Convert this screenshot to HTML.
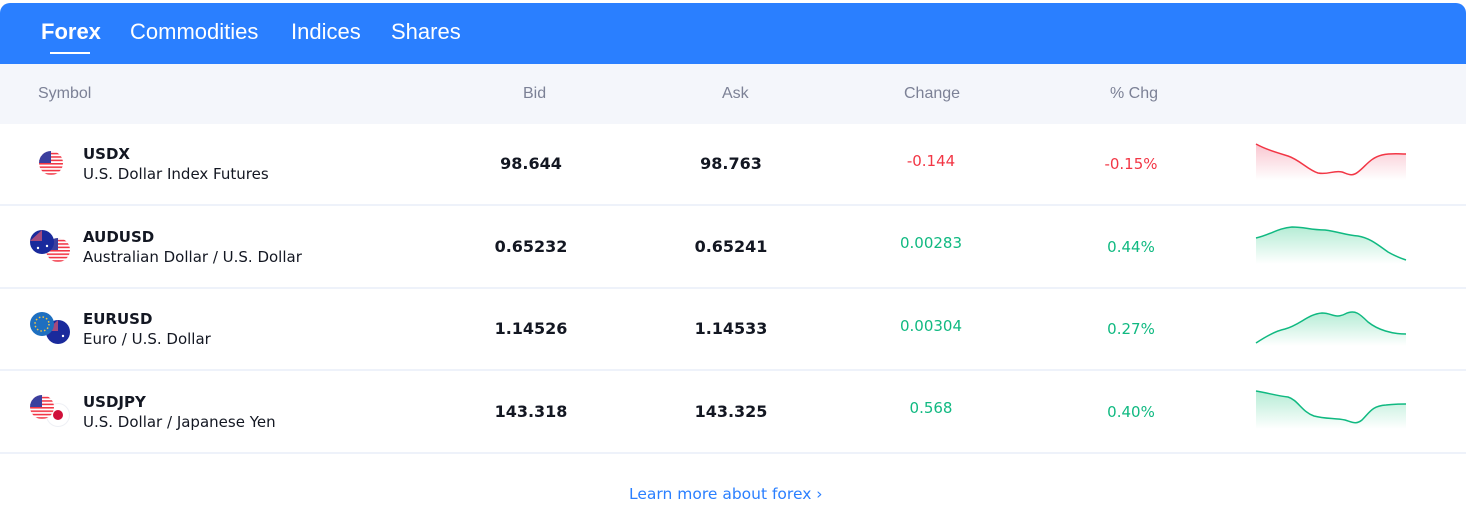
<!DOCTYPE html>
<html><head><style>
body{margin:0;width:1466px;height:512px;background:#fff;font-family:"Liberation Sans","DejaVu Sans",sans-serif;position:relative;overflow:hidden}
.a{position:absolute;white-space:nowrap}
.top{left:0;top:3px;width:1466px;height:61px;background:#2a7fff;border-radius:10px 10px 0 0}
.tab{top:19px;font-size:22px;color:#fff}
.hd{left:0;top:64px;width:1466px;height:60px;background:#f4f6fb}
.hc{top:85px;font-size:16px;color:#7c8196}
.ln{left:0;width:1466px;height:2px;background:#eef2fa}
.dv{font-family:"DejaVu Sans",sans-serif}
.sym{font-size:15px;font-weight:bold;color:#131722;font-family:"DejaVu Sans",sans-serif}
.nm{font-size:15px;color:#131722;font-family:"DejaVu Sans",sans-serif}
.num{font-size:16px;font-weight:bold;color:#131722;transform:translateX(-50%);font-family:"DejaVu Sans",sans-serif}
.c{font-size:15px;transform:translateX(-50%);font-family:"DejaVu Sans",sans-serif}
.r{color:#f23645}.g{color:#10b981}
</style></head><body>
<div class="a top"></div>
<div class="a tab" style="left:41px;font-weight:bold">Forex</div>
<div class="a" style="left:50px;top:52px;width:40px;height:2px;background:#fff"></div>
<div class="a tab" style="left:130px">Commodities</div>
<div class="a tab" style="left:291px">Indices</div>
<div class="a tab" style="left:391px">Shares</div>
<div class="a hd"></div>
<div class="a hc" style="left:38px">Symbol</div>
<div class="a hc" style="left:523px">Bid</div>
<div class="a hc" style="left:722px">Ask</div>
<div class="a hc" style="left:904px">Change</div>
<div class="a hc" style="left:1110px">% Chg</div>
<div class="a ln" style="top:204px"></div>
<div class="a ln" style="top:287px"></div>
<div class="a ln" style="top:369px"></div>
<div class="a ln" style="top:452px"></div>

<svg class="a" style="left:0;top:0" width="80" height="512">
<defs>
<pattern id="us" width="24" height="3.4" patternUnits="userSpaceOnUse"><rect width="24" height="1.7" fill="#f23645"/><rect y="1.7" width="24" height="1.7" fill="#fff"/></pattern>
</defs>
<g transform="translate(51,163)"><circle r="12" fill="url(#us)"/><path d="M-12 0A12 12 0 0 1 0-12V0Z" fill="#3b3f9e"/></g>
<g transform="translate(58,250)"><circle r="12" fill="url(#us)"/><path d="M-12 0A12 12 0 0 1 0-12V0Z" fill="#3b3f9e"/></g>
<g transform="translate(42,242)"><circle r="12" fill="#1a2a9c"/><path d="M-12 -1H0V-12" fill="#e05870" opacity=".7"/><circle cx="5" cy="4" r="1.2" fill="#fff"/><circle cx="-4" cy="6" r="1.2" fill="#fff"/></g>
<g transform="translate(58,332)"><circle r="12" fill="#1a2a9c"/><path d="M-12 -1H0V-12" fill="#e05870" opacity=".7"/><circle cx="5" cy="4" r="1.2" fill="#fff"/></g>
<g transform="translate(42,324)"><circle r="12" fill="#1e6fc0"/><circle r="7" fill="none" stroke="#f4c542" stroke-width="1.5" stroke-dasharray="1.5 2.2"/></g>
<g transform="translate(58,415)"><circle r="11.5" fill="#fff" stroke="#eef0f5"/><circle r="5" fill="#d0103a"/></g>
<g transform="translate(42,407)"><circle r="12" fill="url(#us)"/><path d="M-12 0A12 12 0 0 1 0-12V0Z" fill="#3b3f9e"/></g>
</svg>

<div class="a sym" style="left:83px;top:145px">USDX</div>
<div class="a nm" style="left:83px;top:165px">U.S. Dollar Index Futures</div>
<div class="a sym" style="left:83px;top:228px">AUDUSD</div>
<div class="a nm" style="left:83px;top:248px">Australian Dollar / U.S. Dollar</div>
<div class="a sym" style="left:83px;top:310px">EURUSD</div>
<div class="a nm" style="left:83px;top:330px">Euro / U.S. Dollar</div>
<div class="a sym" style="left:83px;top:393px">USDJPY</div>
<div class="a nm" style="left:83px;top:413px">U.S. Dollar / Japanese Yen</div>

<div class="a num" style="left:531px;top:154px">98.644</div>
<div class="a num" style="left:731px;top:154px">98.763</div>
<div class="a c r" style="left:931px;top:152px">-0.144</div>
<div class="a c r" style="left:1131px;top:155px">-0.15%</div>
<div class="a num" style="left:531px;top:237px">0.65232</div>
<div class="a num" style="left:731px;top:237px">0.65241</div>
<div class="a c g" style="left:931px;top:234px">0.00283</div>
<div class="a c g" style="left:1131px;top:238px">0.44%</div>
<div class="a num" style="left:531px;top:319px">1.14526</div>
<div class="a num" style="left:731px;top:319px">1.14533</div>
<div class="a c g" style="left:931px;top:317px">0.00304</div>
<div class="a c g" style="left:1131px;top:320px">0.27%</div>
<div class="a num" style="left:531px;top:402px">143.318</div>
<div class="a num" style="left:731px;top:402px">143.325</div>
<div class="a c g" style="left:931px;top:399px">0.568</div>
<div class="a c g" style="left:1131px;top:403px">0.40%</div>

<svg class="a" style="left:0;top:0" width="1466" height="512">
<defs>
<linearGradient id="rg" x1="0" y1="0" x2="0" y2="1"><stop offset="0" stop-color="#f9c6d0"/><stop offset="1" stop-color="#fff"/></linearGradient>
<linearGradient id="gg" x1="0" y1="0" x2="0" y2="1"><stop offset="0" stop-color="#b5ecd5"/><stop offset="1" stop-color="#fff"/></linearGradient>
</defs>
<path d="M1256 144C1265 149 1275 152 1288 156C1300 160 1308 170 1318 173C1328 175 1334 170 1342 172C1348 174 1352 177 1358 172C1366 166 1370 158 1382 155C1392 153 1398 154 1406 154V180H1256Z" fill="url(#rg)"/>
<path d="M1256 144C1265 149 1275 152 1288 156C1300 160 1308 170 1318 173C1328 175 1334 170 1342 172C1348 174 1352 177 1358 172C1366 166 1370 158 1382 155C1392 153 1398 154 1406 154" fill="none" stroke="#f23645" stroke-width="1.5"/>
<path d="M1256 238C1270 235 1278 228 1292 227C1305 227 1310 230 1325 230C1340 232 1345 235 1358 236C1370 238 1378 245 1388 252C1395 256 1400 258 1406 260V264H1256Z" fill="url(#gg)"/>
<path d="M1256 238C1270 235 1278 228 1292 227C1305 227 1310 230 1325 230C1340 232 1345 235 1358 236C1370 238 1378 245 1388 252C1395 256 1400 258 1406 260" fill="none" stroke="#10b981" stroke-width="1.5"/>
<path d="M1256 343C1265 337 1275 331 1285 329C1300 325 1308 314 1322 313C1332 313 1335 319 1345 314C1355 309 1360 314 1368 322C1378 330 1392 334 1406 334V346H1256Z" fill="url(#gg)"/>
<path d="M1256 343C1265 337 1275 331 1285 329C1300 325 1308 314 1322 313C1332 313 1335 319 1345 314C1355 309 1360 314 1368 322C1378 330 1392 334 1406 334" fill="none" stroke="#10b981" stroke-width="1.5"/>
<path d="M1256 391C1268 393 1278 396 1288 397C1298 400 1302 412 1314 416C1325 419 1335 418 1345 420C1352 422 1356 425 1362 420C1370 412 1372 406 1386 405C1395 404 1400 404 1406 404V429H1256Z" fill="url(#gg)"/>
<path d="M1256 391C1268 393 1278 396 1288 397C1298 400 1302 412 1314 416C1325 419 1335 418 1345 420C1352 422 1356 425 1362 420C1370 412 1372 406 1386 405C1395 404 1400 404 1406 404" fill="none" stroke="#10b981" stroke-width="1.5"/>
</svg>

<div class="a dv" style="left:629px;top:485px;font-size:15.5px;color:#2a7fff">Learn more about forex ›</div>
</body></html>
